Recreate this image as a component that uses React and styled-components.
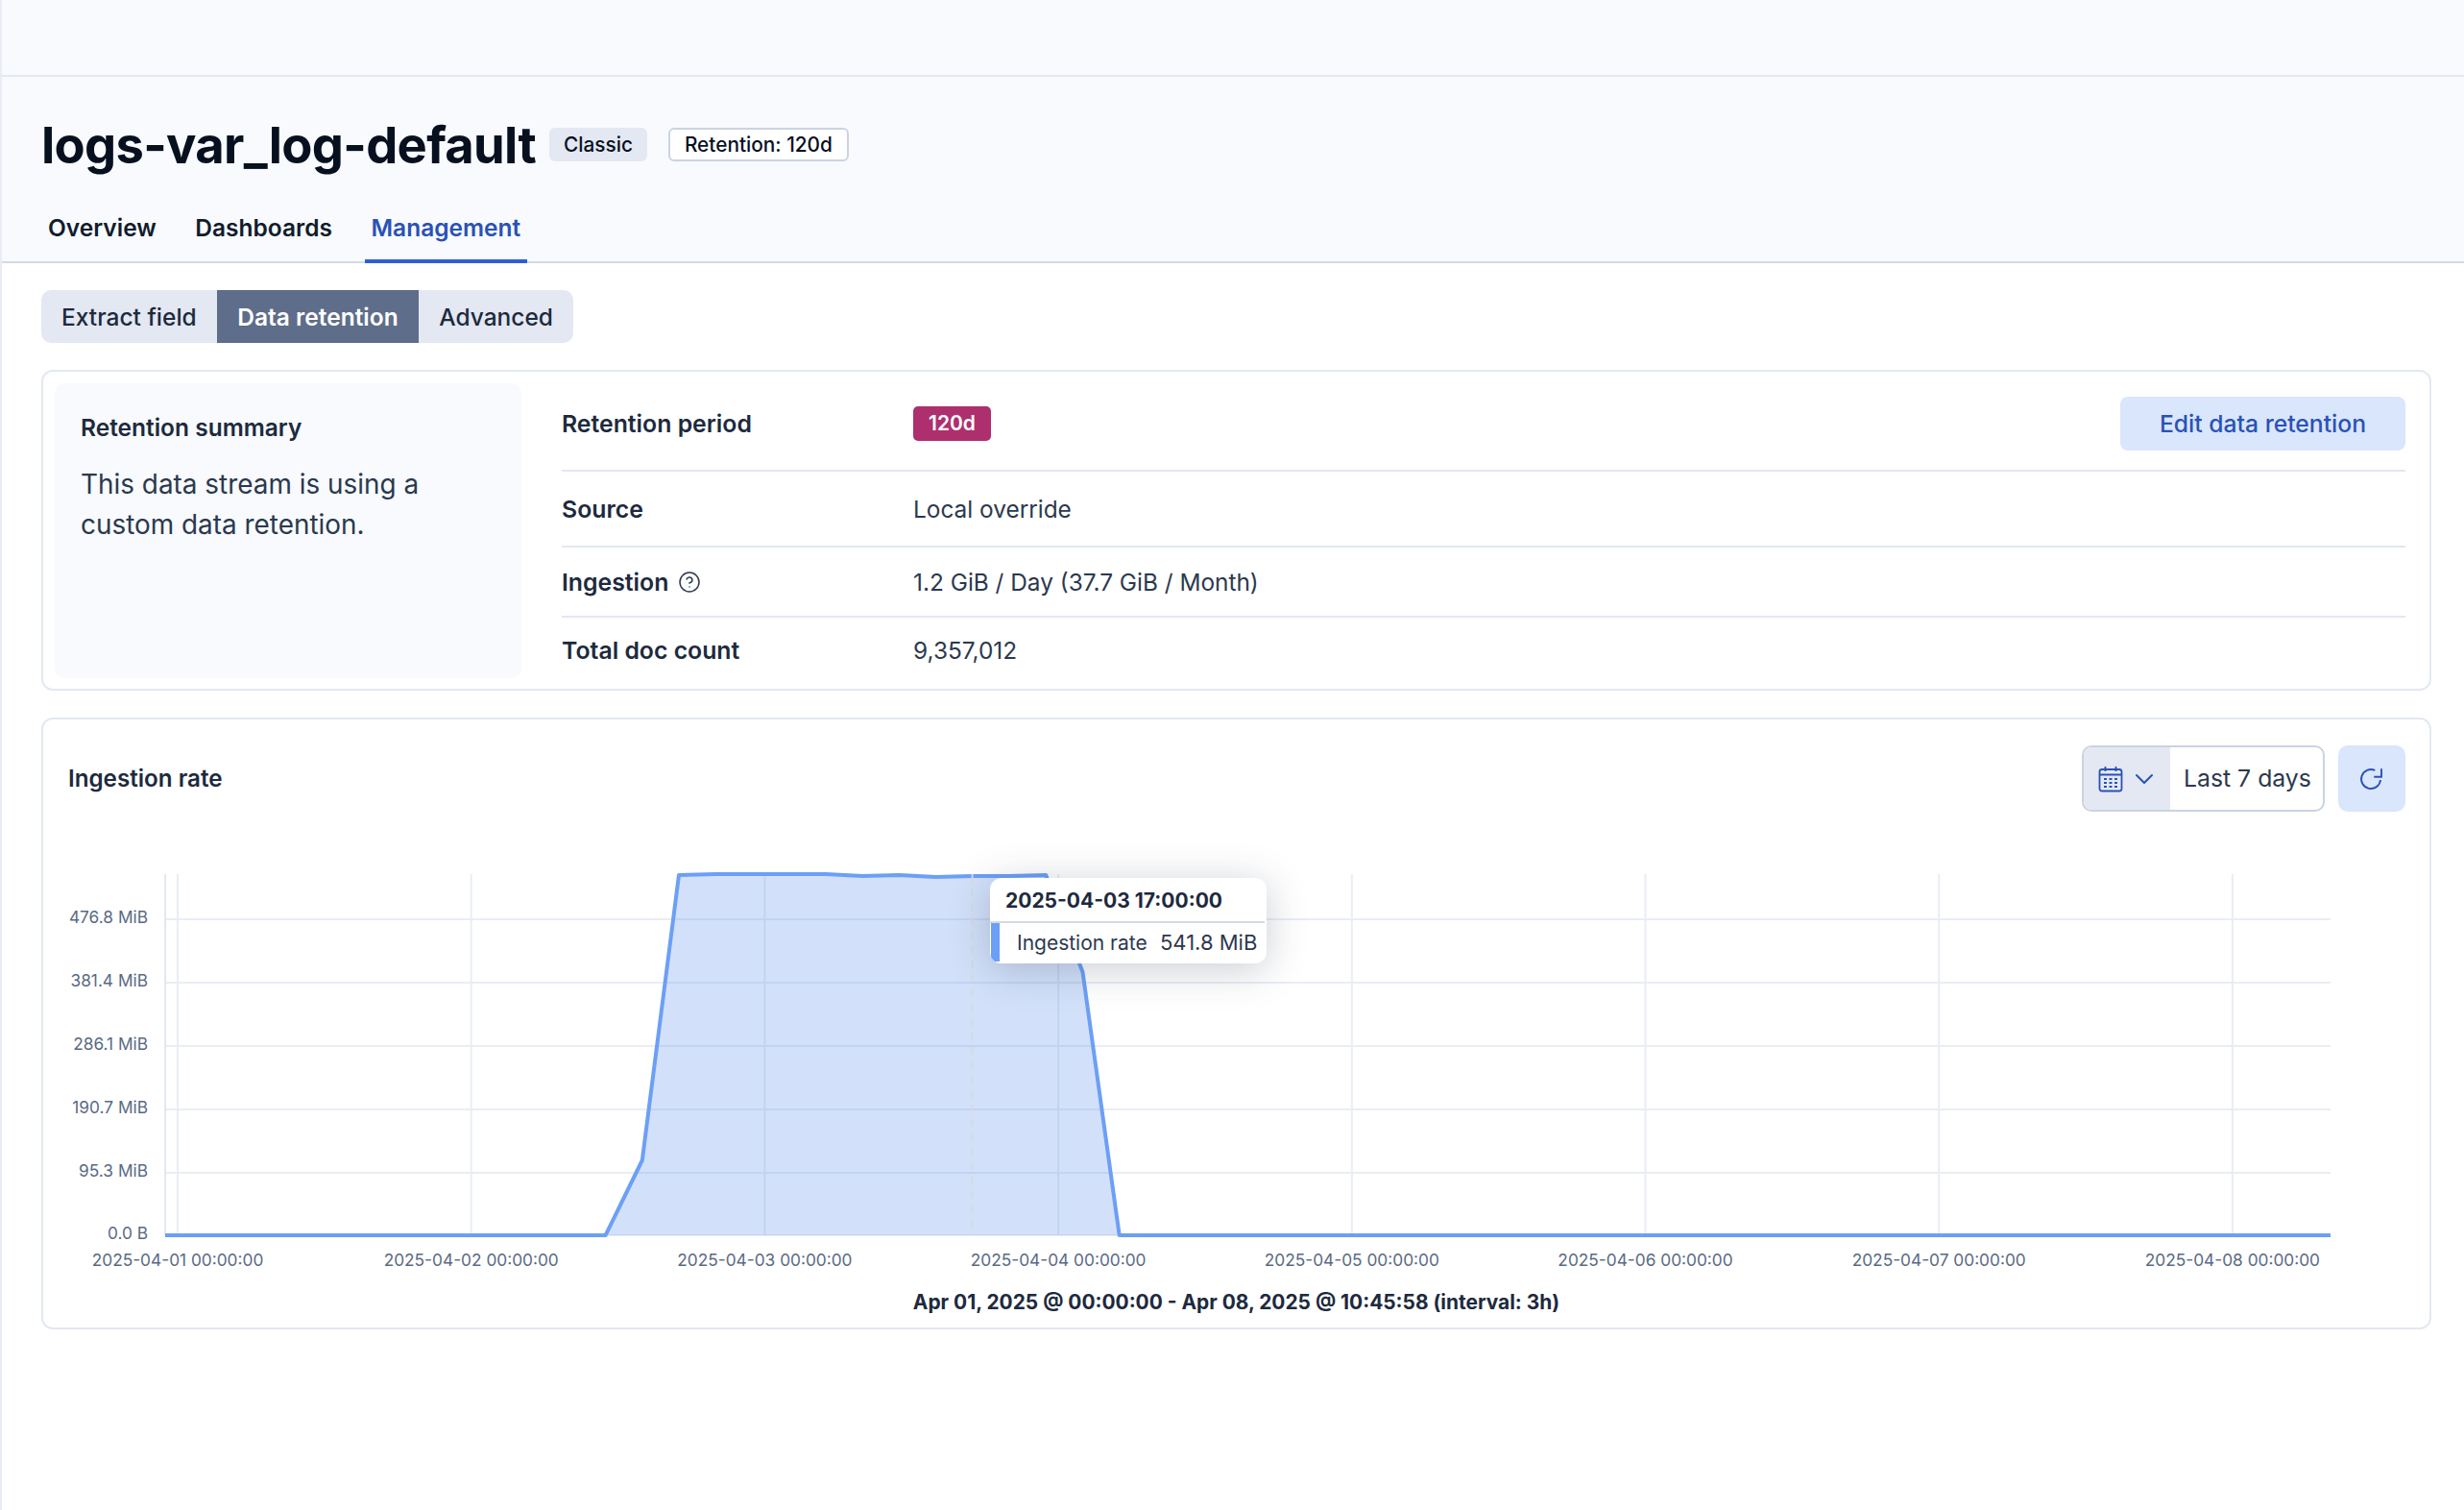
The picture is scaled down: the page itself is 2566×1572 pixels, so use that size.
import React from 'react';
import styled, { createGlobalStyle } from 'styled-components';
import { ChevronDown, CircleHelp } from 'lucide-react';

const GlobalStyle = createGlobalStyle`
  html, body {
    margin: 0;
    padding: 0;
    background: #fff;
    font-family: Inter, "Liberation Sans", sans-serif;
    color: #2b394f;
  }
  * { box-sizing: border-box; }
`;

const X_TICKS = ['2025-04-01', '2025-04-02', '2025-04-03', '2025-04-04', '2025-04-05', '2025-04-06', '2025-04-07', '2025-04-08'];
const Y_TICKS = [
  ['476.8 MiB', 956],
  ['381.4 MiB', 1022],
  ['286.1 MiB', 1088],
  ['190.7 MiB', 1154],
  ['95.3 MiB', 1220],
  ['0.0 B', 1285],
];
const BASE = 1285;
const RIGHT = 2427;
// y of every 3h bucket, starting where the line leaves the baseline
const SERIES = [BASE, 1207, 910, 909, 909, 909, 909, 911, 910, 912, 911, 911, 910, 1011, BASE];
const STEP = 38.22;
const START = 630.6;

const tickX = (i) => 185 + 305.7 * i;
const seriesPoints = [
  [172, BASE],
  ...SERIES.map((y, i) => [START + STEP * i, y]),
  [RIGHT, BASE],
];
const linePath = seriesPoints.map(([x, y], i) => `${i ? 'L' : 'M'}${x.toFixed(1)} ${y}`).join(' ');
const areaPath = `${linePath} L${RIGHT} ${BASE} L172 ${BASE} Z`;

function CalendarIcon() {
  return (
    <svg width="26" height="28" viewBox="0 0 26 28" fill="none" stroke="#2a52b5" strokeWidth="1.8">
      <rect x="1.5" y="4" width="23" height="22.5" rx="2.5" />
      <path d="M1.5 9.5h23M7.5 1v5M18.5 1v5" />
      <path d="M6 14h3M11.5 14h3M17 14h3M6 18h3M11.5 18h3M17 18h3M6 22h3M11.5 22h3M17 22h3" strokeWidth="2" />
    </svg>
  );
}

function RefreshIcon() {
  return (
    <svg width="26" height="26" viewBox="0 0 26 26" fill="none" stroke="#2a52b5" strokeWidth="1.9">
      <path d="M16.3 4A10 10 0 1 0 22 14" />
      <path d="M23 2.3V10.7H15.3" />
    </svg>
  );
}

function App() {
  return (
    <Page>
      <GlobalStyle />
      <TopBar />
      <Header>
        <TitleRow>
          <Title>logs-var_log-default</Title>
          <Badge>Classic</Badge>
          <Badge $outline>Retention: 120d</Badge>
        </TitleRow>
        <Tabs>
          <Tab>Overview</Tab>
          <Tab>Dashboards</Tab>
          <Tab $active>Management</Tab>
        </Tabs>
      </Header>
      <Content>
        <ButtonGroup>
          <GroupButton>Extract field</GroupButton>
          <GroupButton $active>Data retention</GroupButton>
          <GroupButton>Advanced</GroupButton>
        </ButtonGroup>

        <SummaryCard>
          <SummaryPanel>
            <PanelTitle>Retention summary</PanelTitle>
            <PanelText>This data stream is using a custom data retention.</PanelText>
          </SummaryPanel>
          <Rows>
            <Row $height={78} $top>
              <Label>Retention period</Label>
              <div><PinkBadge>120d</PinkBadge></div>
              <EditButton>Edit data retention</EditButton>
            </Row>
            <Row $height={79}>
              <Label>Source</Label>
              <Value>Local override</Value>
            </Row>
            <Row $height={73}>
              <Label>
                Ingestion
                <CircleHelp size={24} strokeWidth={1.5} color="#2b394f" />
              </Label>
              <Value>1.2 GiB / Day (37.7 GiB / Month)</Value>
            </Row>
            <Row $height={67} $last>
              <Label>Total doc count</Label>
              <Value>9,357,012</Value>
            </Row>
          </Rows>
        </SummaryCard>

        <ChartCard>
          <ChartHeader>
            <ChartTitle>Ingestion rate</ChartTitle>
            <ChartControls>
              <DatePicker>
                <DateIcon>
                  <CalendarIcon />
                  <ChevronDown size={32} strokeWidth={1.5} color="#2a52b5" />
                </DateIcon>
                <DateText>Last 7 days</DateText>
              </DatePicker>
              <RefreshButton>
                <RefreshIcon />
              </RefreshButton>
            </ChartControls>
          </ChartHeader>

          <ChartArea>
            <svg width="2485" height="440" viewBox="45 890 2485 440" style={{ display: 'block' }}>
              {Y_TICKS.map(([label, y]) => (
                <g key={label}>
                  <line x1="172" x2={RIGHT} y1={y} y2={y} stroke="#e9edf5" strokeWidth="2" />
                  <text x="154" y={y + 4} textAnchor="end" fontSize="17.3" fill="#5a6a85">{label}</text>
                </g>
              ))}
              <line x1="172" x2="172" y1="909" y2={BASE} stroke="#e3e8f2" strokeWidth="2" />
              {X_TICKS.map((day, i) => (
                <g key={day}>
                  <line x1={tickX(i)} x2={tickX(i)} y1="909" y2={BASE} stroke="#e9edf5" strokeWidth="2" />
                  <text x={tickX(i)} y="1317" textAnchor="middle" fontSize="17.3" fill="#5a6a85">{day} 00:00:00</text>
                </g>
              ))}
              <path d={areaPath} fill="#5f90ea" fillOpacity="0.28" />
              <path d={linePath} fill="none" stroke="#6c9ff6" strokeWidth="4" strokeLinejoin="round" />
              <line x1="1012.5" x2="1012.5" y1="909" y2={BASE} stroke="#d5d9e2" strokeWidth="2" strokeDasharray="8 7" />
            </svg>
            <Tooltip>
              <TooltipHead>2025-04-03 17:00:00</TooltipHead>
              <TooltipRow>
                <TooltipName>Ingestion rate</TooltipName>
                <TooltipValue>541.8 MiB</TooltipValue>
              </TooltipRow>
            </Tooltip>
          </ChartArea>
          <ChartCaption>Apr 01, 2025 @ 00:00:00 - Apr 08, 2025 @ 10:45:58 (interval: 3h)</ChartCaption>
        </ChartCard>
      </Content>
    </Page>
  );
}

const Page = styled.div`
  min-height: 1572px;
  width: 2566px;
  border-left: 2px solid #e8ecf4;
  background: #fff;
`;

const TopBar = styled.div`
  height: 80px;
  background: #f8fafd;
  border-bottom: 2px solid #e3e8f2;
`;

const Header = styled.header`
  background: #f8fafd;
  border-bottom: 2px solid #d3dae6;
  padding: 36px 0 0 41px;
  height: 194px;
`;

const TitleRow = styled.div`
  display: flex;
  align-items: flex-start;
  height: 70px;
`;

const Title = styled.h1`
  margin: 0 14px 0 0;
  font-size: 52.5px;
  font-weight: 700;
  line-height: 70px;
  letter-spacing: -0.7px;
  color: #07101f;
`;

const Badge = styled.span`
  display: inline-flex;
  align-items: center;
  height: 35px;
  margin: 17px 22px 0 0;
  padding: 0 15px;
  border-radius: 6px;
  font-size: 20.8px;
  font-weight: 500;
  color: #07101f;
  background: ${(p) => (p.$outline ? '#fff' : '#e3e8f2')};
  border: ${(p) => (p.$outline ? '2px solid #cad3e2' : 'none')};
`;

const Tabs = styled.nav`
  display: flex;
  margin-top: 14px;
`;

const Tab = styled.a`
  display: block;
  height: 74px;
  line-height: 74px;
  padding: 0 7px;
  margin-right: 26.5px;
  font-size: 24.5px;
  font-weight: 600;
  color: ${(p) => (p.$active ? '#2a52b5' : '#111c2c')};
  border-bottom: ${(p) => (p.$active ? '4px solid #2b5fd9' : 'none')};
`;

const Content = styled.main`
  padding: 28px 32px 0 41px;
`;

const ButtonGroup = styled.div`
  display: inline-flex;
  height: 55px;
  border-radius: 10px;
  overflow: hidden;
  background: #e3e8f2;
  vertical-align: top;
`;

const GroupButton = styled.button`
  border: none;
  padding: 0 ${(p) => (p.$active ? '21.6px' : '21px')};
  font-family: inherit;
  font-size: 24.5px;
  font-weight: ${(p) => (p.$active ? 600 : 500)};
  color: ${(p) => (p.$active ? '#fff' : '#1d2a3e')};
  background: ${(p) => (p.$active ? '#5e6d8a' : 'transparent')};
`;

const Card = styled.section`
  width: 2489px;
  border: 2px solid #e3e8f2;
  border-radius: 12px;
  background: #fff;
`;

const SummaryCard = styled(Card)`
  display: flex;
  height: 334px;
  margin-top: 28px;
  padding: 12px 25px 11px 12px;
`;

const SummaryPanel = styled.div`
  width: 486px;
  flex: none;
  padding: 30px 27px;
  border-radius: 10px;
  background: #f8fafd;
`;

const PanelTitle = styled.div`
  font-size: 24.5px;
  line-height: 32px;
  font-weight: 600;
  color: #1d2a3e;
`;

const PanelText = styled.p`
  margin: 22px 0 0;
  font-size: 27.9px;
  line-height: 42px;
  color: #2b394f;
`;

const Rows = styled.div`
  flex: 1;
  margin-left: 42px;
  padding-top: 14px;
`;

const Row = styled.div`
  display: grid;
  grid-template-columns: 366px 1fr auto;
  align-items: ${(p) => (p.$top ? 'start' : 'center')};
  height: ${(p) => p.$height}px;
  border-bottom: ${(p) => (p.$last ? 'none' : '2px solid #e3e8f2')};
  ${(p) => p.$top && 'line-height: 56px;'}
`;

const Label = styled.div`
  display: flex;
  align-items: center;
  gap: 10px;
  font-size: 24.8px;
  font-weight: 600;
  color: #1d2a3e;
`;

const Value = styled.div`
  font-size: 24.4px;
  color: #2b394f;
`;

const PinkBadge = styled.span`
  display: inline-block;
  margin-top: 10px;
  width: 81px;
  height: 36px;
  line-height: 36px;
  text-align: center;
  border-radius: 5px;
  background: #ad2f6e;
  color: #fff;
  font-size: 21px;
  font-weight: 600;
  vertical-align: top;
`;

const EditButton = styled.button`
  width: 297px;
  height: 56px;
  border: none;
  border-radius: 8px;
  background: #d9e6fb;
  color: #2a52b5;
  font-family: inherit;
  font-size: 24.7px;
  font-weight: 500;
`;

const ChartCard = styled(Card)`
  height: 637px;
  margin-top: 28px;
`;

const ChartHeader = styled.div`
  display: flex;
  align-items: center;
  justify-content: space-between;
  height: 69px;
  margin-top: 27px;
  padding: 0 25px 0 26px;
`;

const ChartTitle = styled.h2`
  margin: 0;
  font-size: 24.2px;
  font-weight: 600;
  color: #1d2a3e;
`;

const ChartControls = styled.div`
  display: flex;
  gap: 14px;
`;

const DatePicker = styled.div`
  display: flex;
  width: 253px;
  height: 69px;
  border: 2px solid #cad3e2;
  border-radius: 10px;
  overflow: hidden;
`;

const DateIcon = styled.div`
  display: flex;
  align-items: center;
  gap: 6px;
  width: 90px;
  padding-left: 15px;
  background: #e3e8f2;
`;

const DateText = styled.div`
  flex: 1;
  line-height: 65px;
  padding-left: 14px;
  font-size: 24.8px;
  color: #2b394f;
`;

const RefreshButton = styled.button`
  display: flex;
  align-items: center;
  justify-content: center;
  width: 70px;
  height: 69px;
  padding: 0;
  border: none;
  border-radius: 10px;
  background: #d9e6fb;
`;

const ChartArea = styled.div`
  position: relative;
  margin-top: 46px;
`;

const Tooltip = styled.div`
  position: absolute;
  left: 986px;
  top: 23px;
  width: 288px;
  height: 89px;
  border-radius: 12px;
  overflow: hidden;
  background: #fff;
  box-shadow: 0 6px 40px rgba(43, 57, 79, 0.25);
`;

const TooltipHead = styled.div`
  height: 47px;
  padding: 0 0 0 16px;
  line-height: 47px;
  font-size: 21px;
  font-weight: 700;
  color: #1d2a3e;
  border-bottom: 2px solid #d3dae6;
  margin-right: 2px;
`;

const TooltipRow = styled.div`
  display: flex;
  align-items: center;
  height: 40px;
  margin-left: 1px;
  padding-left: 18px;
  border-left: 9px solid #6c9ff6;
  font-size: 21px;
  color: #2b394f;
`;

const TooltipName = styled.span`
  width: 149px;
  flex: none;
`;

const TooltipValue = styled.span`
  font-size: 22px;
  white-space: nowrap;
`;

const ChartCaption = styled.div`
  text-align: center;
  font-size: 20.9px;
  font-weight: 700;
  line-height: 50px;
  color: #1d2a3e;
`;

export default App;
